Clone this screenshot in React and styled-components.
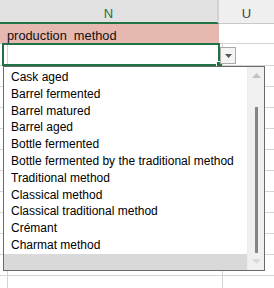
import React from "react";
import styled, { createGlobalStyle } from "styled-components";

const Global = createGlobalStyle`
  html, body { margin: 0; padding: 0; background: #ffffff; }
  body { width: 274px; height: 288px; overflow: hidden; font-family: "Liberation Sans", Arial, sans-serif; }
`;

const Sheet = styled.div`
  position: relative;
  width: 274px;
  height: 288px;
  overflow: hidden;
  background: #fff;
`;

const HeaderRow = styled.div`
  display: flex;
  height: 24px;
`;

const ColHeader = styled.div`
  box-sizing: border-box;
  display: flex;
  align-items: center;
  justify-content: center;
  padding-top: 5px;
  width: ${(p) => (p.$w ? `${p.$w}px` : "auto")};
  flex: ${(p) => (p.$w ? "none" : "1")};
  background: ${(p) => (p.$selected ? "#e1e1e1" : "#efefef")};
  border-bottom: ${(p) => (p.$selected ? "2px solid #217346" : "1px solid #c8c8c8")};
  border-right: ${(p) => (p.$divider ? "2px solid #d2d2d2" : "none")};
  color: ${(p) => (p.$selected ? "#217346" : "#444")};
  font-size: 13px;
  ${(p) => (p.$selected ? "" : "padding-bottom: 1px;")}
`;

const Row = styled.div`
  display: flex;
  height: ${(p) => p.$h}px;
  border-bottom: 1px solid #d4d4d4;
`;

const Cell = styled.div`
  box-sizing: border-box;
  width: ${(p) => (p.$w ? `${p.$w}px` : "auto")};
  flex: ${(p) => (p.$w ? "none" : "1")};
  background: ${(p) => p.$bg || "transparent"};
  border-right: ${(p) => (p.$line ? "1px solid #d4d4d4" : "none")};
  font-family: "Liberation Sans", Arial, sans-serif;
  font-size: 12.8px;
  color: #111;
  white-space: pre;
  padding: 4px 0 0 7px;
  line-height: 15px;
`;

const Selection = styled.div`
  position: absolute;
  left: 2px;
  top: 43px;
  width: 218px;
  height: 23px;
  box-sizing: border-box;
  border: 2px solid #217346;
`;

const Handle = styled.div`
  position: absolute;
  right: -4px;
  bottom: -3px;
  width: 5px;
  height: 5px;
  background: #217346;
  border-left: 1px solid #fff;
  border-top: 1px solid #fff;
`;

const DropButton = styled.div`
  position: absolute;
  left: 220px;
  top: 47px;
  width: 16px;
  height: 17px;
  box-sizing: border-box;
  border: 1px solid #ababab;
  background: #f4f4f4;
  display: flex;
  align-items: center;
  justify-content: center;
`;

const List = styled.div`
  position: absolute;
  left: 3px;
  top: 66px;
  width: 262px;
  height: 205px;
  box-sizing: border-box;
  border: 1px solid #6a6a6a;
  background: #fff;
  display: flex;
`;

const Items = styled.div`
  flex: 1;
  display: flex;
  flex-direction: column;
  padding-top: 2px;
`;

const Item = styled.div`
  height: 16.8px;
  line-height: 16.8px;
  padding-left: 7px;
  font-family: "Liberation Sans", Arial, sans-serif;
  font-size: 12px;
  color: #000;
  white-space: nowrap;
  background: ${(p) => (p.$active ? "#d9d9d9" : "transparent")};
`;

const Scrollbar = styled.div`
  width: 17px;
  box-sizing: border-box;
  border-left: 1px solid #e4eef9;
  background: #f0f0f0;
  display: flex;
  flex-direction: column;
  align-items: center;
`;

const ArrowBox = styled.div`
  height: 17px;
  width: 100%;
  display: flex;
  align-items: center;
  justify-content: center;
`;

const Track = styled.div`
  flex: 1;
  display: flex;
  justify-content: center;
  padding-top: 23px;
`;

const Thumb = styled.div`
  width: 3px;
  background: #858585;
  height: 146px;
`;

const items = [
  "Cask aged",
  "Barrel fermented",
  "Barrel matured",
  "Barrel aged",
  "Bottle fermented",
  "Bottle fermented by the traditional method",
  "Traditional method",
  "Classical method",
  "Classical traditional method",
  "Crémant",
  "Charmat method",
];

const gridRows = [20, 20, 20, 20, 20, 20, 20, 20, 20, 20, 20];

export default function App() {
  return (
    <>
      <Global />
      <Sheet>
        <HeaderRow>
          <ColHeader $w={219} $selected $divider>N</ColHeader>
          <ColHeader>U</ColHeader>
        </HeaderRow>
        <Row $h={19}>
          <Cell $w={219} $bg="#e6b8af">{"production  method"}</Cell>
          <Cell />
        </Row>
        <Row $h={21}>
          <Cell $w={4} $line />
          <Cell $w={215} $line />
          <Cell />
        </Row>
        {gridRows.map((h, i) => (
          <Row key={i} $h={h}>
            <Cell $w={4} $line />
            <Cell $w={215} $line />
            <Cell />
          </Row>
        ))}
        <Selection>
          <Handle />
        </Selection>
        <DropButton>
          <svg width="7" height="4" viewBox="0 0 7 4">
            <path d="M0 0 H7 L3.5 4 Z" fill="#555" />
          </svg>
        </DropButton>
        <List>
          <Items>
            {items.map((t) => (
              <Item key={t}>{t}</Item>
            ))}
            <Item $active />
          </Items>
          <Scrollbar>
            <ArrowBox>
              <svg width="9" height="5" viewBox="0 0 9 5">
                <path d="M0 5 L4.5 0 L9 5 Z" fill="#c4c4c4" />
              </svg>
            </ArrowBox>
            <Track>
              <Thumb />
            </Track>
            <ArrowBox>
              <svg width="9" height="5" viewBox="0 0 9 5">
                <path d="M0 0 H9 L4.5 5 Z" fill="#dadada" />
              </svg>
            </ArrowBox>
          </Scrollbar>
        </List>
      </Sheet>
    </>
  );
}
